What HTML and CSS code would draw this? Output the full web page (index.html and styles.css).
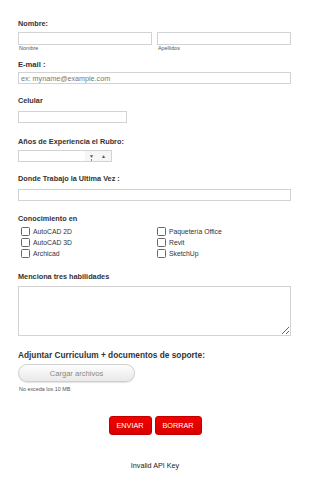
FILE: index.html
```html
<!DOCTYPE html>
<html lang="es">
<head>
    <meta charset="UTF-8">
    <meta name="viewport" content="width=device-width, initial-scale=1.0">
    <link rel="stylesheet" href="styles.css">
    <title>Formulario</title>
</head>
<body>
    <form class="form-container">
        <div class="field field-name">
            <label class="label">Nombre:</label>
            <div class="name-row">
                <div class="name-col">
                    <input type="text" class="input">
                    <span class="sublabel">Nombre</span>
                </div>
                <div class="name-col">
                    <input type="text" class="input">
                    <span class="sublabel">Apellidos</span>
                </div>
            </div>
        </div>

        <div class="field field-email">
            <label class="label">E-mail :</label>
            <input type="email" class="input" placeholder="ex: myname@example.com">
        </div>

        <div class="field field-phone">
            <label class="label">Celular</label>
            <input type="tel" class="input input-phone">
        </div>

        <div class="field field-years">
            <label class="label">Años de Experiencia el Rubro:</label>
            <div class="number-box">
                <input type="text" class="number-input">
                <span class="spinner"><span class="spin-down">&#9660;</span><span class="spin-up">&#9650;</span></span>
            </div>
        </div>

        <div class="field field-last">
            <label class="label">Donde Trabajo la Ultima Vez :</label>
            <input type="text" class="input">
        </div>

        <div class="field field-skills">
            <label class="label">Conocimiento en</label>
            <div class="check-grid">
                <label class="check"><input type="checkbox" class="check-box"> AutoCAD 2D</label>
                <label class="check"><input type="checkbox" class="check-box"> Paquetería Office</label>
                <label class="check"><input type="checkbox" class="check-box"> AutoCAD 3D</label>
                <label class="check"><input type="checkbox" class="check-box"> Revit</label>
                <label class="check"><input type="checkbox" class="check-box"> Archicad</label>
                <label class="check"><input type="checkbox" class="check-box"> SketchUp</label>
            </div>
        </div>

        <div class="field field-abilities">
            <label class="label">Menciona tres habilidades</label>
            <textarea class="textarea"></textarea>
        </div>

        <div class="field field-upload">
            <label class="label label-upload">Adjuntar Curriculum + documentos de soporte:</label>
            <button type="button" class="upload-btn">Cargar archivos</button>
            <span class="sublabel">No exceda los 10 MB</span>
        </div>

        <div class="actions">
            <button type="submit" class="red-btn btn-send">ENVIAR</button>
            <button type="reset" class="red-btn btn-clear">BORRAR</button>
        </div>

        <p class="api-msg">Invalid API Key</p>
    </form>
</body>
</html>
```

FILE: styles.css
```css
body {
    font-family: 'Liberation Sans', Arial, sans-serif;
    margin: 0;
    padding: 0;
    background-color: #fff;
    color: #333;
}

.form-container {
    padding: 19px 19px 0 18px;
    width: 273px;
}

.field {
    display: flex;
    flex-direction: column;
}

.label {
    display: block;
    font-weight: bold;
    font-size: 7.3px;
    line-height: 10px;
    color: #333;
}

.label-upload {
    font-size: 8.3px;
}

.field-name .label { margin-bottom: 3px; }
.field-email { margin-top: 8px; }
.field-email .label { margin-bottom: 2px; font-size: 7.6px; }
.field-phone { margin-top: 12px; }
.field-phone .label { margin-bottom: 5px; }
.field-years { margin-top: 14px; }
.field-years .label { margin-bottom: 3px; }
.field-last { margin-top: 12px; }
.field-last .label { margin-bottom: 5px; }
.field-skills { margin-top: 13px; }
.field-abilities { margin-top: 13px; }
.field-abilities .label { margin-bottom: 4px; }
.field-upload { margin-top: 14px; }
.field-upload .label { margin-bottom: 4px; }

.input {
    box-sizing: border-box;
    width: 100%;
    height: 12px;
    margin: 0;
    padding: 0 2px;
    border: 1px solid #d3d3d3;
    border-radius: 0;
    background: #fff;
    font-family: inherit;
    font-size: 7.2px;
    color: #333;
    outline: none;
}

.input::placeholder {
    color: #777;
}

.field-name .input { height: 13px; }

.input-phone {
    width: 109px;
}

.name-row {
    display: flex;
    gap: 5px;
}

.name-col {
    flex: 1;
    display: flex;
    flex-direction: column;
}

.sublabel {
    display: block;
    font-size: 5.4px;
    line-height: 7px;
    color: #555;
    padding-left: 1px;
}

.number-box {
    box-sizing: border-box;
    display: flex;
    width: 94px;
    height: 12px;
    border: 1px solid #d3d3d3;
    background: #fff;
}

.number-input {
    flex: 1;
    min-width: 0;
    border: none;
    padding: 0;
    outline: none;
}

.spinner {
    display: flex;
    align-items: center;
    gap: 7px;
    padding: 0 5px 0 4px;
    font-size: 5px;
    line-height: 5px;
    color: #555;
    background: #f6f6f6;
}

.spin-down {
    position: relative;
}

.spin-down::after {
    content: "";
    position: absolute;
    left: 2px;
    top: 5px;
    width: 1px;
    height: 2px;
    background: #888;
}

.check-grid {
    display: grid;
    grid-template-columns: 136px 1fr;
    margin-top: 2px;
}

.check {
    display: flex;
    align-items: center;
    height: 11px;
    padding-left: 3px;
    font-size: 6.8px;
    color: #333;
}

.check-box {
    appearance: none;
    -webkit-appearance: none;
    box-sizing: border-box;
    width: 9px;
    height: 9px;
    margin: 0 3px 0 0;
    border: 1px solid #666;
    border-radius: 1.5px;
    background: #fff;
}

.textarea {
    box-sizing: border-box;
    width: 100%;
    height: 50px;
    margin: 0;
    border: 1px solid #d3d3d3;
    border-radius: 0;
    resize: both;
    outline: none;
}

.upload-btn {
    box-sizing: border-box;
    width: 117px;
    height: 18px;
    margin-bottom: 4px;
    border: 1px solid #d0d0d0;
    border-radius: 9px;
    background: linear-gradient(#fdfdfd, #e9e9e9);
    box-shadow: 0 1px 1px rgba(0, 0, 0, 0.12);
    font-family: inherit;
    font-size: 7.6px;
    color: #888;
    cursor: pointer;
}

.actions {
    display: flex;
    justify-content: center;
    gap: 3px;
    margin: 23px -19px 0 -18px;
}

.red-btn {
    box-sizing: border-box;
    height: 19px;
    padding: 0;
    border: 1px solid #c20000;
    border-radius: 3px;
    background: linear-gradient(#f40000, #d80000);
    color: #fff;
    font-family: inherit;
    font-size: 7.3px;
    cursor: pointer;
}

.btn-send { width: 43px; }
.btn-clear { width: 47px; }

.api-msg {
    margin: 26px -19px 0 -18px;
    text-align: center;
    font-size: 7.2px;
    line-height: 10px;
    color: #222;
}
```
